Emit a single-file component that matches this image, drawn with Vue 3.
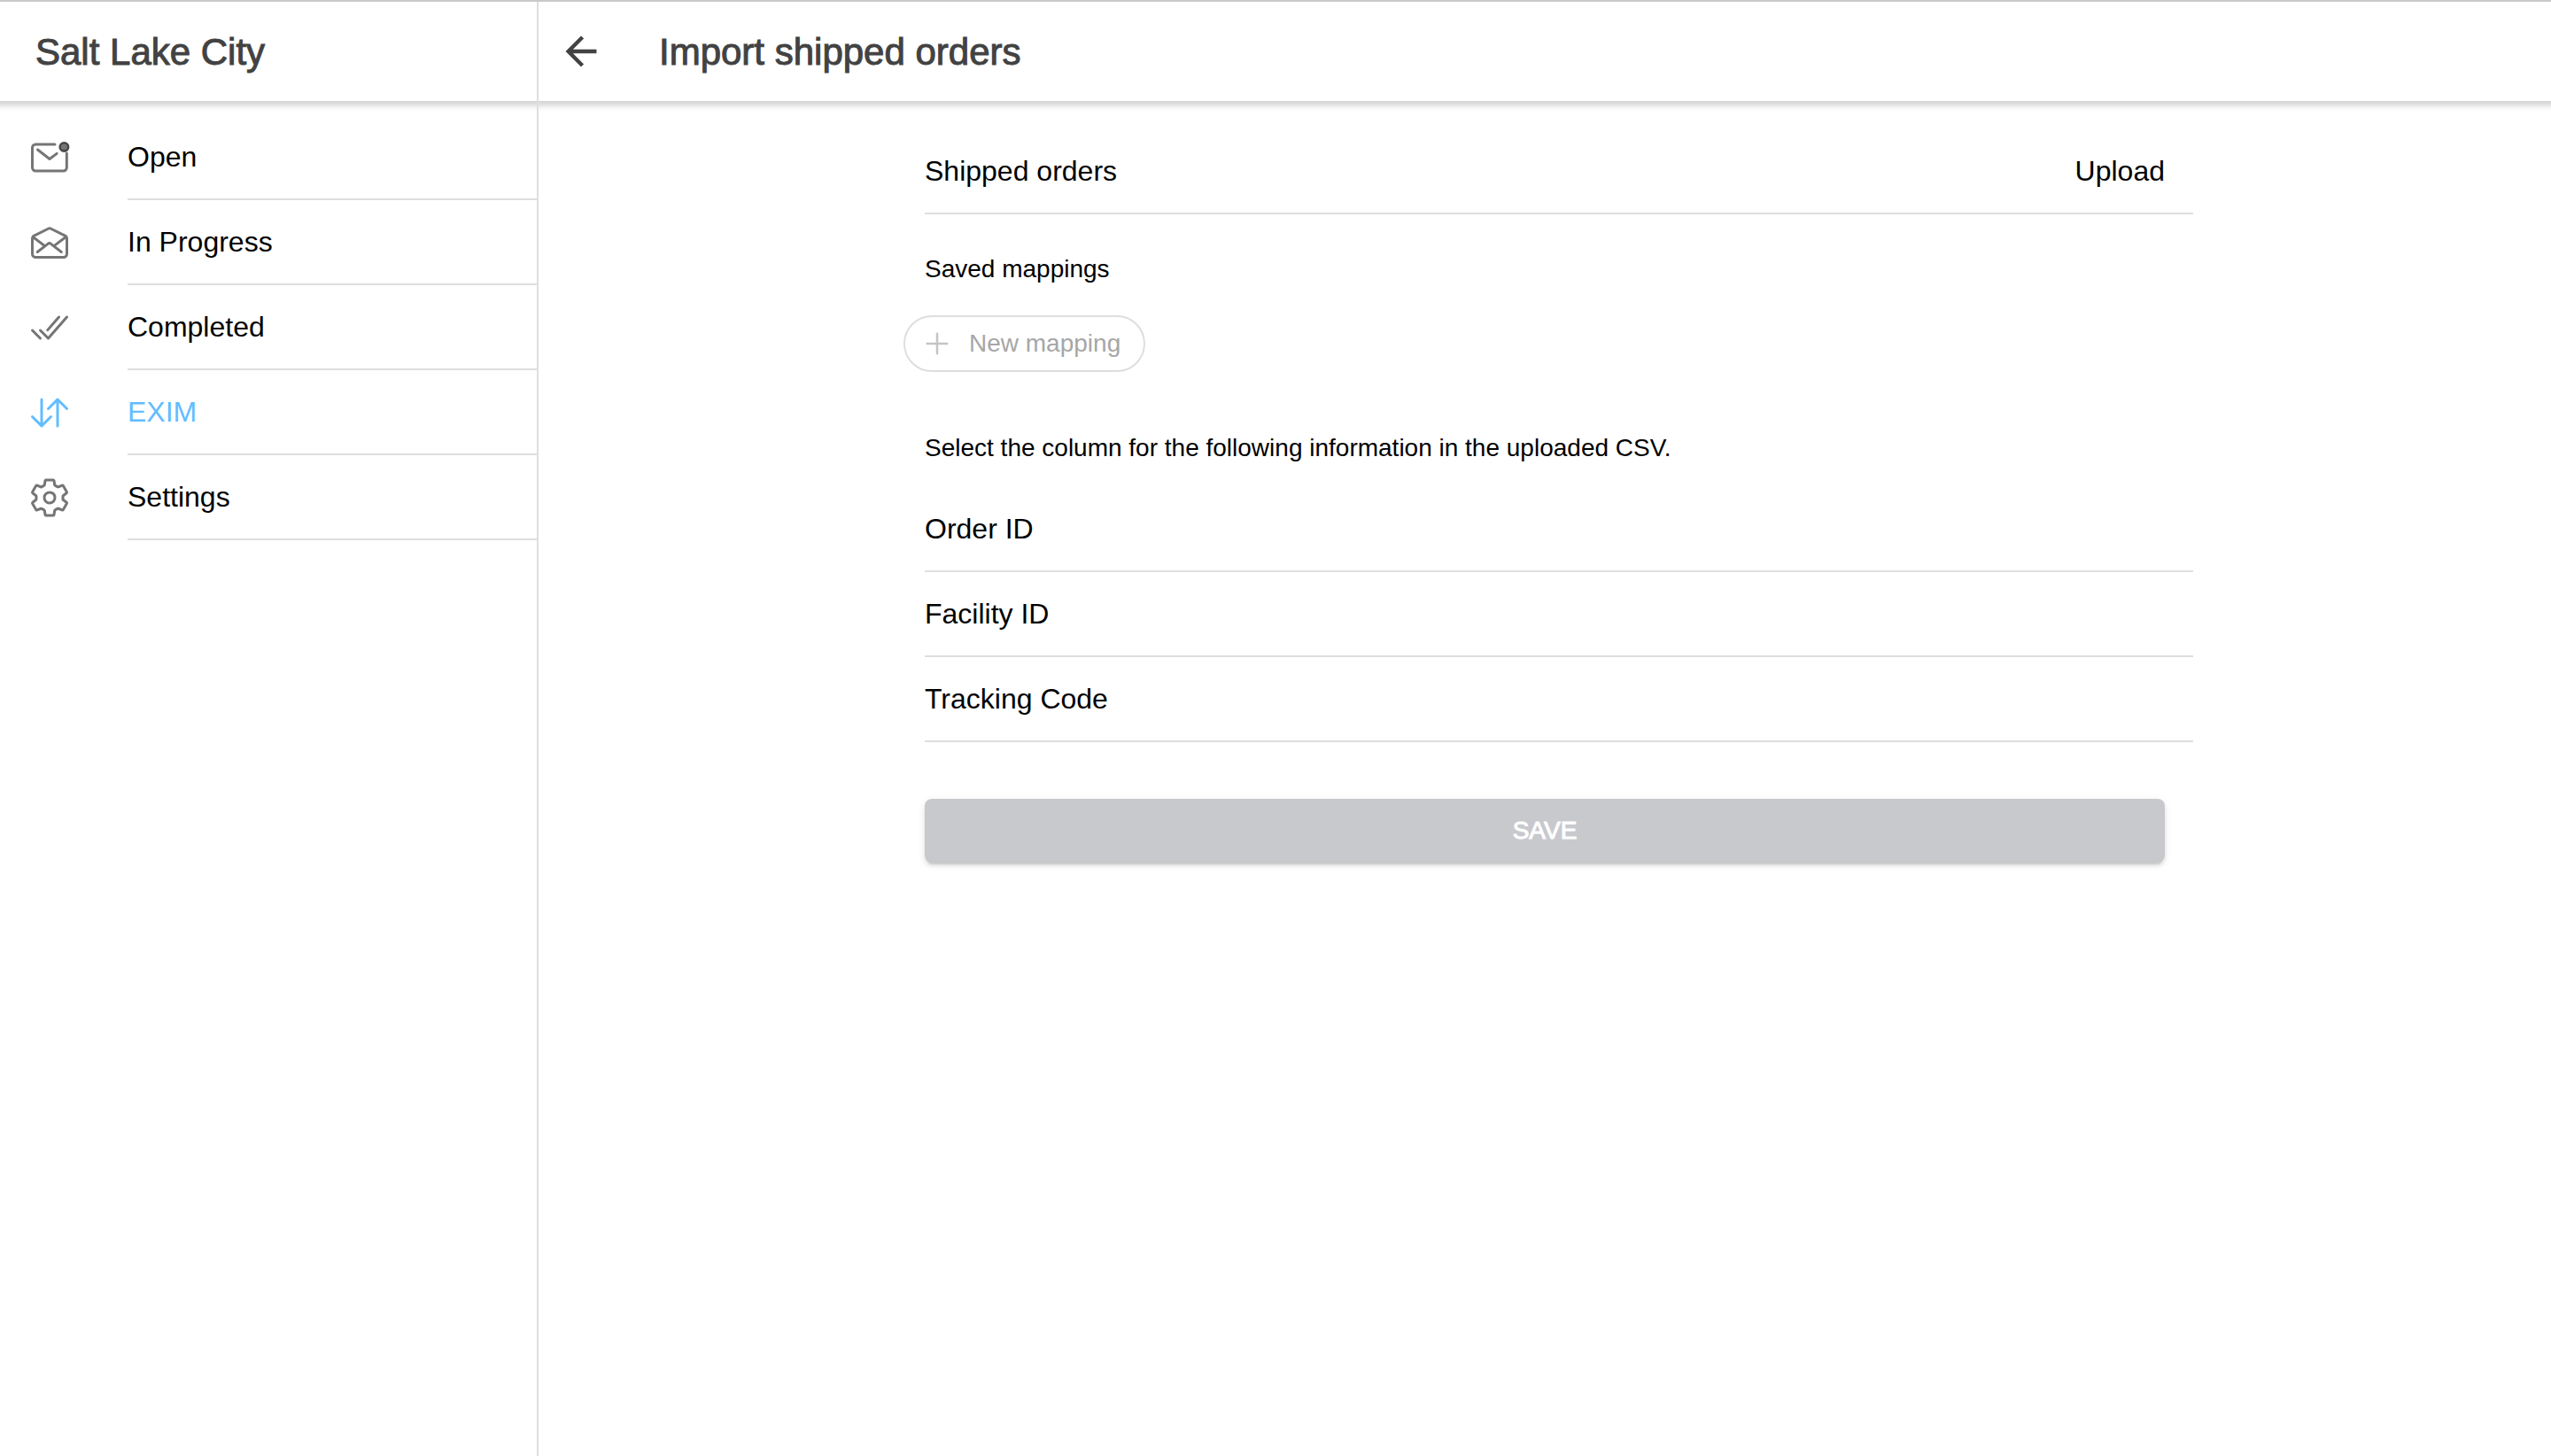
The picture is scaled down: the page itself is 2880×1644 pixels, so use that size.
<script setup>
import { ref } from 'vue'

const active = ref('EXIM')
const pages = [
  { name: 'Open', icon: 'unread' },
  { name: 'In Progress', icon: 'mailOpen' },
  { name: 'Completed', icon: 'doneAll' },
  { name: 'EXIM', icon: 'swap' },
  { name: 'Settings', icon: 'gear' },
]
const fields = [
  { id: 'order-id', label: 'Order ID' },
  { id: 'facility-id', label: 'Facility ID' },
  { id: 'tracking-code', label: 'Tracking Code' },
]
</script>

<template>
  <div class="app">
    <aside class="side">
      <header class="bar">
        <h1 class="title">Salt Lake City</h1>
      </header>
      <nav class="menu">
        <a
          v-for="page in pages"
          :key="page.name"
          href="#"
          class="entry"
          :class="{ selected: page.name === active }"
          @click.prevent="active = page.name"
        >
          <svg class="icon" viewBox="0 0 512 512" aria-hidden="true">
            <template v-if="page.icon === 'unread'">
              <path d="M320 96H88a40 40 0 0 0-40 40v240a40 40 0 0 0 40 40h334a40 40 0 0 0 40-40V202" />
              <path d="M112 160l144 112 87-65" />
              <circle class="dot" cx="431" cy="128" r="33" />
              <circle cx="431" cy="128" r="48" class="ring" />
            </template>
            <template v-else-if="page.icon === 'mailOpen'">
              <path d="M441.600 171.610L266.870 85.370a24.570 24.570 0 0 0-21.740 0L70.400 171.610A40 40 0 0 0 48 207.390V392c0 22.090 18.140 40 40.520 40h335c22.380 0 40.520-17.910 40.520-40V207.390a40 40 0 0 0-22.440-35.780z" />
              <path d="M397.330 368L268.070 267.460a24 24 0 0 0-29.470 0L109.330 368M309.330 295l136-103M61.330 192l139 105" />
            </template>
            <template v-else-if="page.icon === 'doneAll'">
              <path d="M464 128L240 384l-96-96M144 384l-96-96M368 128L232 284" />
            </template>
            <template v-else-if="page.icon === 'swap'">
              <path d="M464 208L352 96 240 208M352 113.130V416M48 304l112 112 112-112M160 398V96" />
            </template>
            <template v-else>
              <path d="M262.290 192.310a64 64 0 1 0 57.400 57.400 64.130 64.130 0 0 0-57.400-57.400zM416.390 256a154.340 154.340 0 0 1-1.530 20.790l45.210 35.460a10.810 10.810 0 0 1 2.450 13.750l-42.770 74a10.810 10.810 0 0 1-13.140 4.590l-44.900-18.080a16.110 16.110 0 0 0-15.170 1.750A164.480 164.480 0 0 1 325 400.800a15.940 15.940 0 0 0-8.820 12.140l-6.730 47.890a11.080 11.080 0 0 1-10.680 9.170h-85.540a11.110 11.110 0 0 1-10.690-8.870l-6.720-47.820a16.070 16.070 0 0 0-9-12.220 155.300 155.300 0 0 1-21.460-12.570 16 16 0 0 0-15.110-1.710l-44.890 18.070a10.810 10.810 0 0 1-13.140-4.580l-42.770-74a10.800 10.800 0 0 1 2.450-13.750l38.210-30a16.050 16.050 0 0 0 6-14.080c-.36-4.170-.58-8.330-.58-12.500s.21-8.270.58-12.350a16 16 0 0 0-6.070-13.940l-38.190-30A10.810 10.810 0 0 1 49.480 186l42.770-74a10.810 10.810 0 0 1 13.140-4.590l44.900 18.080a16.110 16.110 0 0 0 15.170-1.750A164.480 164.480 0 0 1 187 111.200a15.940 15.940 0 0 0 8.820-12.140l6.730-47.890A11.080 11.080 0 0 1 213.230 42h85.540a11.110 11.110 0 0 1 10.690 8.870l6.720 47.820a16.070 16.070 0 0 0 9 12.220 155.300 155.300 0 0 1 21.460 12.570 16 16 0 0 0 15.110 1.710l44.890-18.070a10.810 10.810 0 0 1 13.140 4.580l42.770 74a10.800 10.800 0 0 1-2.450 13.750l-38.210 30a16.050 16.050 0 0 0-6.050 14.080c.33 4.140.55 8.300.55 12.470z" />
            </template>
          </svg>
          <span class="entry-label">{{ page.name }}</span>
        </a>
      </nav>
    </aside>

    <section class="page">
      <header class="bar">
        <button type="button" class="back" aria-label="Back">
          <svg viewBox="1 1 22 22" aria-hidden="true">
            <path d="M20 11H7.830l5.590-5.590L12 4l-8 8 8 8 1.410-1.410L7.830 13H20v-2z" />
          </svg>
        </button>
        <h2 class="title">Import shipped orders</h2>
      </header>

      <main class="content">
        <div class="row">
          <span>Shipped orders</span>
          <button type="button" class="upload">Upload</button>
        </div>

        <h3 class="note saved">Saved mappings</h3>
        <button type="button" class="chip" disabled>
          <svg viewBox="0 0 512 512" aria-hidden="true">
            <path d="M256 112v288M400 256H112" />
          </svg>
          <span>New mapping</span>
        </button>

        <p class="note hint">Select the column for the following information in the uploaded CSV.</p>

        <div v-for="field in fields" :key="field.id" class="row">
          <label :for="field.id">{{ field.label }}</label>
          <select :id="field.id" class="picker"></select>
        </div>

        <button type="button" class="save" disabled>SAVE</button>
      </main>
    </section>
  </div>
</template>

<style>
body {
  margin: 0;
  background: #fff;
}
</style>

<style scoped>
.app,
.app * {
  box-sizing: border-box;
}

.app {
  display: flex;
  min-height: 100vh;
  border-top: 2px solid #c9c9c9;
  font-family: "Liberation Sans", Arial, sans-serif;
  font-size: 32px;
  line-height: 40px;
  color: #000;
}

button,
select {
  margin: 0;
  padding: 0;
  border: 0;
  background: none;
  font: inherit;
  color: inherit;
}

.side {
  flex: 0 0 608px;
  border-right: 2px solid #dedede;
}

.page {
  flex: 1;
  min-width: 0;
}

.bar {
  position: relative;
  display: flex;
  align-items: center;
  height: 112px;
  padding: 0 40px;
}

.bar::after {
  content: "";
  position: absolute;
  top: 100%;
  left: 0;
  right: 0;
  height: 12px;
  background: linear-gradient(#d4d4d4, #dadada 2px, #e6e6e6 5px, #f8f8f8 8px, #fff);
}

.title {
  margin: 0;
  padding-top: 2px;
  font-size: 42px;
  line-height: 48px;
  font-weight: 400;
  color: #424242;
  -webkit-text-stroke: 1px #424242;
}

.menu {
  padding-top: 16px;
}

.entry {
  display: flex;
  align-items: center;
  gap: 64px;
  padding-left: 32px;
  color: inherit;
  text-decoration: none;
}

.icon {
  flex: none;
  width: 48px;
  height: 48px;
  fill: none;
  stroke: #757575;
  stroke-width: 32;
  stroke-linecap: round;
  stroke-linejoin: round;
}

.dot {
  fill: #757575;
  stroke: none;
}

.ring {
  stroke: #4a4a4a;
}

.entry-label {
  display: flex;
  align-items: center;
  flex: 1;
  height: 96px;
  border-bottom: 2px solid #dedede;
}

.selected {
  color: #62bdff;
}

.selected .icon {
  stroke: #62bdff;
}

.page .bar {
  gap: 64px;
  padding-left: 24px;
}

.back {
  width: 48px;
  height: 48px;
}

.back svg {
  display: block;
  width: 48px;
  height: 48px;
  fill: #424242;
}

.content {
  display: flex;
  flex-direction: column;
  max-width: 1464px;
  margin: 0 auto;
  padding: 32px 0 32px 32px;
}

.row {
  display: flex;
  align-items: center;
  justify-content: space-between;
  height: 96px;
  padding-right: 32px;
  border-bottom: 2px solid #dedede;
}

.picker {
  flex: 1;
  margin-left: 32px;
  height: 64px;
  appearance: none;
}

.note {
  display: flex;
  align-items: center;
  margin: 0;
  font-size: 28px;
  font-weight: 400;
}

.saved {
  height: 114px;
  padding-top: 10px;
}

.chip {
  display: flex;
  align-items: center;
  align-self: flex-start;
  gap: 16px;
  height: 64px;
  margin-left: -24px;
  padding: 0 26px 0 16px;
  border: 2px solid #dedede;
  border-radius: 32px;
  font-size: 28px;
  color: #a6a6a6;
}

.chip svg {
  width: 40px;
  height: 40px;
  fill: none;
  stroke: #c4c4c4;
  stroke-width: 32;
  stroke-linecap: round;
}

.hint {
  height: 130px;
  padding-top: 42px;
}

.save {
  height: 72px;
  margin: 64px 32px 0 0;
  border-radius: 8px;
  background: #c8c9cd;
  box-shadow: 0 6px 2px -4px rgba(0, 0, 0, 0.1), 0 4px 4px rgba(0, 0, 0, 0.08), 0 2px 10px rgba(0, 0, 0, 0.08);
  font-size: 28px;
  color: #fff;
  -webkit-text-stroke: 1px #fff;
}
</style>
